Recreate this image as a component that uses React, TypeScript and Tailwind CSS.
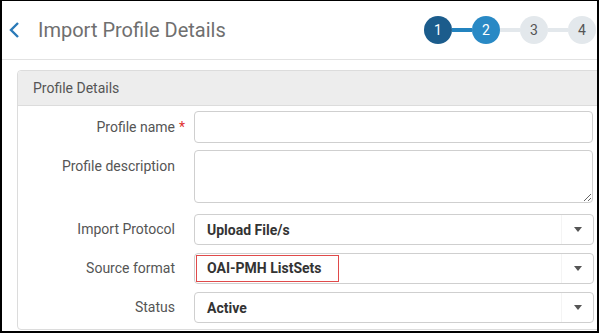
import React from 'react';

const font = { fontFamily: 'Roboto, "Liberation Sans", sans-serif' };

const steps = [
    { n: 1, cls: 'bg-[#1b5c8c] text-white' },
    { n: 2, cls: 'bg-[#2989c5] text-white' },
    { n: 3, cls: 'bg-[#e3e8ec] text-[#555]' },
    { n: 4, cls: 'bg-[#e3e8ec] text-[#555]' },
];

const Caret = () => (
    <div className="flex w-[32px] h-full items-center justify-center border-l border-[#f4f4f4]">
        <svg width="8" height="5" viewBox="0 0 8 5"><path d="M0 0h8L4 5z" fill="#555" /></svg>
    </div>
);

// one label + field row
const Row = ({ label, required, top, children }: { label: string; required?: boolean; top?: boolean; children: React.ReactNode }) => (
    <div className={`flex ${top ? 'items-start' : 'items-center'}`}>
        <div className={`relative w-[157px] shrink-0 text-right text-[14px] text-[#555] ${top ? 'pt-[6px]' : ''}`}>
            {label}
            {required && <span className="absolute left-[161px] top-0 text-[#e0312f]">*</span>}
        </div>
        <div className="ml-[19px]">{children}</div>
    </div>
);

const Select = ({ value, boxed }: { value: string; boxed?: boolean }) => (
    <div className="flex h-[31px] w-[400px] items-center rounded-[4px] border border-[#cfcfcf] bg-white">
        <div className={`flex-1 ${boxed ? 'pl-[2px]' : 'pl-[12px]'}`}>
            {boxed ? (
                <div className="w-[141px] outline outline-1 outline-[#e04a4a] my-[1px] py-[2px] pl-[10px] text-[14px] font-bold text-[#333]">{value}</div>
            ) : (
                <span className="text-[14px] font-bold text-[#333]">{value}</span>
            )}
        </div>
        <Caret />
    </div>
);

export default function App() {
    return (
        <div style={font} className="w-[599px] h-[333px] overflow-hidden border-t border-l-2 border-r-2 border-b-2 border-black bg-white">
            <div className="flex h-[59px] items-center border-b border-[#e2e2e2]">
                <svg className="ml-[6px]" width="13" height="18" viewBox="0 0 13 18">
                    <path d="M10 2L3 9l7 7" fill="none" stroke="#2a7ab8" strokeWidth="2.4" />
                </svg>
                <h1 className="ml-[17px] text-[20px] text-[#6f6f6f]">Import Profile Details</h1>
                <div className="ml-auto mr-[1px] flex items-center">
                    {steps.map((s, i) => (
                        <React.Fragment key={s.n}>
                            {i > 0 && <div className={`h-[4px] w-[20px] ${i === 1 ? 'bg-[#2383bf]' : 'bg-[#e3e8ec]'}`} />}
                            <div className={`flex h-[28px] w-[28px] items-center justify-center rounded-full text-[14px] ${s.cls}`}>{s.n}</div>
                        </React.Fragment>
                    ))}
                </div>
            </div>

            <div className="ml-[15px] mr-[-6px] mt-[10px] rounded-[4px] border border-[#dcdcdc]">
                <div className="h-[35px] rounded-t-[4px] border-b border-[#dcdcdc] bg-[#ededed] pl-[15px] pt-[7px] text-[14px] text-[#555]">
                    Profile Details
                </div>
                <div className="flex flex-col pt-[5px] pb-[6px]">
                    <Row label="Profile name" required>
                        <input className="block h-[32px] w-[399px] rounded-[4px] border border-[#cfcfcf] outline-none" />
                    </Row>
                    <div className="h-[7px]" />
                    <Row label="Profile description" top>
                        <textarea className="block h-[53px] w-[399px] rounded-[4px] border border-[#cfcfcf] outline-none" />
                    </Row>
                    <div className="h-[11px]" />
                    <Row label="Import Protocol">
                        <Select value="Upload File/s" />
                    </Row>
                    <div className="h-[8px]" />
                    <Row label="Source format">
                        <Select value="OAI-PMH ListSets" boxed />
                    </Row>
                    <div className="h-[8px]" />
                    <Row label="Status">
                        <Select value="Active" />
                    </Row>
                </div>
            </div>
        </div>
    );
}
